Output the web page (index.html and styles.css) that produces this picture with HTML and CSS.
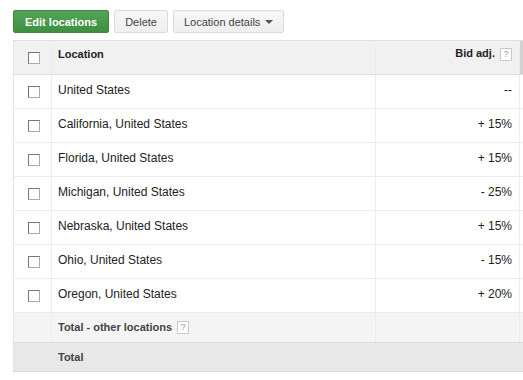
FILE: index.html
```html
<!DOCTYPE html>
<html>
  <head>
    <title>locations</title>
    <link rel="stylesheet" href="styles.css">
  </head>

  <body>
    <div class="page">
      <div class="toolbar">
        <button class="btn btn-green">Edit locations</button>
        <button class="btn">Delete</button>
        <button class="btn">Location details <span class="caret"></span></button>
      </div>

      <table class="grid">
        <thead>
          <tr>
            <th class="col-check"><span class="check"></span></th>
            <th class="col-loc">Location</th>
            <th class="col-bid">Bid adj. <span class="help">?</span></th>
            <th class="col-fill"></th>
          </tr>
        </thead>
        <tbody>
          <tr>
            <td class="col-check"><span class="check"></span></td>
            <td class="col-loc">United States</td>
            <td class="col-bid">--</td>
            <td class="col-fill"></td>
          </tr>
          <tr>
            <td class="col-check"><span class="check"></span></td>
            <td class="col-loc">California, United States</td>
            <td class="col-bid">+ 15%</td>
            <td class="col-fill"></td>
          </tr>
          <tr>
            <td class="col-check"><span class="check"></span></td>
            <td class="col-loc">Florida, United States</td>
            <td class="col-bid">+ 15%</td>
            <td class="col-fill"></td>
          </tr>
          <tr>
            <td class="col-check"><span class="check"></span></td>
            <td class="col-loc">Michigan, United States</td>
            <td class="col-bid">- 25%</td>
            <td class="col-fill"></td>
          </tr>
          <tr>
            <td class="col-check"><span class="check"></span></td>
            <td class="col-loc">Nebraska, United States</td>
            <td class="col-bid">+ 15%</td>
            <td class="col-fill"></td>
          </tr>
          <tr>
            <td class="col-check"><span class="check"></span></td>
            <td class="col-loc">Ohio, United States</td>
            <td class="col-bid">- 15%</td>
            <td class="col-fill"></td>
          </tr>
          <tr>
            <td class="col-check"><span class="check"></span></td>
            <td class="col-loc">Oregon, United States</td>
            <td class="col-bid">+ 20%</td>
            <td class="col-fill"></td>
          </tr>
          <tr class="other">
            <td class="col-check"></td>
            <td class="col-loc">Total - other locations <span class="help">?</span></td>
            <td class="col-bid"></td>
            <td class="col-fill"></td>
          </tr>
          <tr class="total">
            <td class="col-check"></td>
            <td class="col-loc">Total</td>
            <td class="col-bid"></td>
            <td class="col-fill"></td>
          </tr>
        </tbody>
      </table>
    </div>
  </body>
</html>
```

FILE: styles.css
```css
/* page */
body {
  margin: 0;
  background-color: #fff;
  font-family: "Liberation Sans", Arial, sans-serif;
  color: #222;
}

.page {
  padding: 10px 2px 0 13px;
}

/* toolbar buttons */
.toolbar {
  display: flex;
  gap: 5px;
  height: 23px;
  margin-bottom: 7px;
}

.btn {
  font-family: "Liberation Sans", Arial, sans-serif;
  font-size: 11px;
  color: #444;
  height: 23px;
  padding: 0 10px;
  border: 1px solid #dcdcdc;
  border-radius: 2px;
  background: linear-gradient(#f6f6f6, #efefef);
  display: flex;
  align-items: center;
  gap: 5px;
}

.btn-green {
  color: #fff;
  font-weight: bold;
  border-color: #3b8a3e;
  background: linear-gradient(#53a456, #3f8f42);
  padding: 0 11px;
}

.caret {
  width: 0;
  height: 0;
  border-left: 4px solid transparent;
  border-right: 4px solid transparent;
  border-top: 4px solid #555;
}

/* table */
.grid {
  border-collapse: collapse;
  width: 508px;
  table-layout: fixed;
  font-size: 12px;
}

.grid th,
.grid td {
  padding: 0;
  border-bottom: 1px solid #ececec;
  vertical-align: middle;
}

/* row heights come from the checkbox column */
.grid td.col-check,
.grid th.col-check {
  height: 33px;
}

.grid thead th {
  background-color: #f1f1f1;
  border-top: 1px solid #e0e0e0;
  border-bottom: 1px solid #e0e0e0;
  font-size: 11px;
  font-weight: bold;
  color: #222;
}

.grid thead .col-loc,
.grid thead .col-bid {
  padding-bottom: 7px;
}

.grid tbody .col-loc,
.grid tbody .col-bid {
  padding-bottom: 4px;
}

.col-check {
  width: 37px;
  border-left: 1px solid #e3e3e3;
  border-right: 1px solid #ececec;
  text-align: center;
}

.col-loc {
  width: 317px;
  text-align: left;
  padding-left: 6px !important;
  border-right: 1px solid #ececec;
}

.col-bid {
  width: 136px;
  text-align: right;
  padding-right: 7px !important;
  border-right: 1px solid #ececec;
}

.col-fill {
  width: 4px;
}

.grid thead .col-fill {
  background-color: #d2d2d2;
}

.check {
  display: inline-block;
  width: 10px;
  height: 10px;
  border: 1px solid #777;
  border-right-color: #aaa;
  border-bottom-color: #aaa;
  background-color: #fff;
  vertical-align: middle;
  margin-left: 2px;
}

.help {
  display: inline-block;
  width: 10px;
  height: 11px;
  line-height: 11px;
  border: 1px solid #c8c8c8;
  background-color: #fff;
  color: #999;
  font-size: 9px;
  font-weight: normal;
  text-align: center;
  vertical-align: middle;
  margin-left: 2px;
}

.grid .other td {
  padding-bottom: 0;
  background-color: #f4f4f4;
  border-bottom: 1px solid #dedede;
  font-size: 11px;
  font-weight: bold;
  color: #444;
}

.grid .other td.col-check {
  height: 29px;
}

.grid .total td {
  padding-bottom: 0;
  background-color: #e8e8e8;
  border-bottom: 1px solid #dcdcdc;
  border-right-color: #e8e8e8;
  font-size: 11px;
  font-weight: bold;
  color: #444;
}

.grid .total td.col-check {
  height: 28px;
}
```
